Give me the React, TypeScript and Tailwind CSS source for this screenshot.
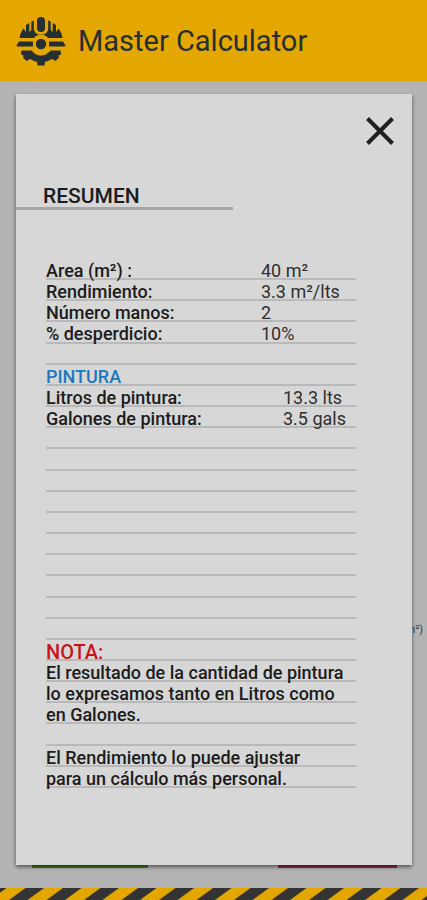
import type { ReactNode } from "react";

type Line = {
  label?: string;
  value?: string;
  indent?: boolean;
  tone?: "blue" | "red";
};

const lines: Line[] = [
  { label: "Area (m²) :", value: "40 m²" },
  { label: "Rendimiento:", value: "3.3 m²/lts" },
  { label: "Número manos:", value: "2" },
  { label: "% desperdicio:", value: "10%" },
  {},
  { label: "PINTURA", tone: "blue" },
  { label: "Litros de pintura:", value: "13.3 lts", indent: true },
  { label: "Galones de pintura:", value: "3.5 gals", indent: true },
  {},
  {},
  {},
  {},
  {},
  {},
  {},
  {},
  {},
  {},
  { label: "NOTA:", tone: "red" },
  { label: "El resultado de la cantidad de pintura" },
  { label: "lo expresamos tanto en Litros como" },
  { label: "en Galones." },
  {},
  { label: "El Rendimiento lo puede ajustar" },
  { label: "para un cálculo más personal." },
];

function HelmetLogo() {
  return (
    <svg viewBox="0 0 50 50" className="size-[50px] shrink-0" fill="#263033" aria-hidden="true">
      <rect x="21" y="1" width="8" height="15" rx="4" />
      <path d="M17.800 4.500V12c0 4 3 7 7.200 7s7.200-3 7.200-7V4.500l2.500 1V14l2 2V7l3.300 2v7l2.500-3.500C44.500 15 46 18 46.500 22H32c-1.500-2-4-3.200-7-3.200S19.500 20 18 22H3.500c.5-4 2-7 4-9.500L10 16V9l3.300-2v9l2-2V5.500z" />
      <path d="M3 25.500H17v5H1.500c-.8 0-1.200-.8-.8-1.500zM33 25.500h14l2.300 3.500c.4.700 0 1.500-.8 1.500H33z" />
      <circle cx="25" cy="28" r="5.200" />
      <path d="M5.500 34.500h10c2.500 3 5.500 5 9.500 5s7-2 9.500-5h10l.5 4-2.500 1 .5 2-3.500 3.500-3.500-2-4 2-3 .7-.5 3.800h-7l-.5-3.800-3-.7-4-2-3.500 2L7 41.500l.5-2-2.500-1z" />
    </svg>
  );
}

function HazardStripes() {
  return (
    <svg className="block h-3 w-full" aria-hidden="true">
      <defs>
        <pattern id="hazard" width="37.500" height="12" patternUnits="userSpaceOnUse">
          <rect width="37.500" height="12" fill="#333333" />
          <path d="M6.500 0H25.500L9 12H-10zM44 0H63L46.500 12H27.500z" fill="#e3a700" />
        </pattern>
      </defs>
      <rect width="100%" height="12" fill="url(#hazard)" />
    </svg>
  );
}

function Row({ label, value, indent, tone }: Line) {
  let text: ReactNode = label;
  if (tone === "blue") text = <h3 className="text-[#1e78bd]">{label}</h3>;
  if (tone === "red") text = <h3 className="text-xl leading-6 text-[#c8141c]">{label}</h3>;
  return (
    <li className="flex min-h-0 flex-1 border-b-2 border-[#b9b9b9] text-lg leading-6 font-medium whitespace-nowrap text-[#1c1c1c]">
      <div className={indent ? "w-[237px] shrink-0" : "w-[215px] shrink-0"}>{text}</div>
      {value && <div className="font-normal text-[#303030]">{value}</div>}
    </li>
  );
}

export default function App() {
  return (
    <div className="flex min-h-screen flex-col bg-[#b4b4b4] font-[Roboto,sans-serif]">
      <header className="flex h-[81px] items-center gap-3 bg-[#e3a700] px-4">
        <HelmetLogo />
        <h1 className="text-[29px] leading-8 text-[#263033]">Master Calculator</h1>
      </header>

      <main className="relative flex flex-1 flex-col">
        <div className="flex flex-1 flex-col justify-between pr-1 pl-8">
          <p className="pt-[541px] text-right text-[11px] leading-4 text-[#3c3c3c]">(m²)</p>
          <div className="mb-5 flex justify-between pr-[26px]">
            <button type="button" aria-label="Calcular" className="h-10 w-[116px] bg-[#3f7a20]" />
            <button type="button" aria-label="Borrar" className="h-10 w-[119px] bg-[#8f2c48]" />
          </div>
        </div>

        <section
          role="dialog"
          aria-labelledby="resumen"
          className="absolute inset-x-4 top-[13px] bottom-[23px] mr-[-1px] bg-[#d7d7d7] shadow-[0_2px_4px_rgba(0,0,0,0.55)]"
        >
          <div className="flex justify-end px-3.5 pt-[19px]">
            <button type="button" aria-label="Cerrar" className="p-1">
              <svg viewBox="0 0 28 28" className="size-7" stroke="#1f1f1f" strokeWidth="4" aria-hidden="true">
                <path d="M1.500 1.500 26.500 26.500M26.500 1.500 1.500 26.500" />
              </svg>
            </button>
          </div>
          <h2
            id="resumen"
            className="mt-[37px] w-[217px] border-b-[3px] border-[#a6a6a6] pl-[27px] text-[21px] leading-[21px] font-medium text-[#1c1c1c]"
          >
            RESUMEN
          </h2>
          <ul className="mt-[49px] mr-14 ml-[30px] flex h-[529px] flex-col">
            {lines.map((line, i) => (
              <Row key={i} {...line} />
            ))}
          </ul>
        </section>
      </main>

      <footer>
        <HazardStripes />
      </footer>
    </div>
  );
}
